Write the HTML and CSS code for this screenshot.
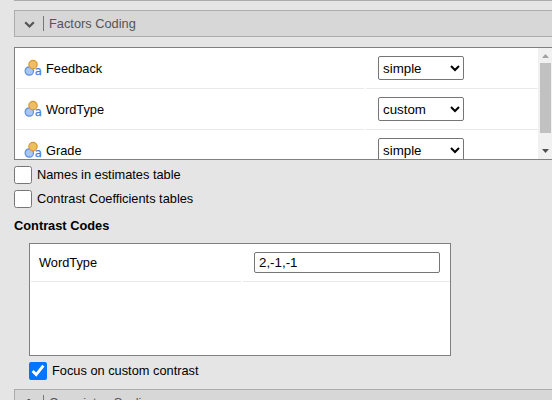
FILE: index.html
```html
<!DOCTYPE html>
<html lang="en">
<head>
<meta charset="utf-8">
<title>Factors Coding</title>
<link rel="stylesheet" href="styles.css">
</head>
<body>
<svg width="0" height="0" class="defs">
  <symbol id="nominal" viewBox="0 0 18 18">
    <circle cx="5.3" cy="12" r="4.2" fill="#a9c5f1" stroke="#5c91e4" stroke-width="1.2"/>
    <circle cx="9" cy="5.6" r="4.2" fill="#f0bd60" stroke="#d69a34" stroke-width="1.2"/>
    <text x="10.8" y="16" class="icon-letter">a</text>
  </symbol>
</svg>
<main class="panel">
  <div class="previous"></div>
  <header class="bar">
    <svg class="chevron" width="12" height="10" viewBox="0 0 12 10"><path d="M1.2 2.2 L5.5 6.5 L9.8 2.2"/></svg>
    <span class="bar-title">Factors Coding</span>
  </header>
  <section class="list">
    <div class="rows">
      <div class="row">
        <div class="name"><svg class="icon"><use href="#nominal"/></svg>Feedback</div>
        <div class="value"><select><option>simple</option></select></div>
      </div>
      <div class="row">
        <div class="name"><svg class="icon"><use href="#nominal"/></svg>WordType</div>
        <div class="value"><select><option>custom</option></select></div>
      </div>
      <div class="row">
        <div class="name"><svg class="icon"><use href="#nominal"/></svg>Grade</div>
        <div class="value"><select><option>simple</option></select></div>
      </div>
    </div>
    <div class="scrollbar">
      <svg class="arrow" width="14" height="15" viewBox="0 0 14 15"><path d="M4 10 L7.5 6 L11 10Z" fill="#a3a3a3"/></svg>
      <div class="thumb"></div>
      <svg class="arrow last" width="14" height="15" viewBox="0 0 14 15"><path d="M4 5 L7.5 9 L11 5Z" fill="#505050"/></svg>
    </div>
  </section>
  <label class="check first"><input type="checkbox">Names in estimates table</label>
  <label class="check second"><input type="checkbox">Contrast Coefficients tables</label>
  <h2>Contrast Codes</h2>
  <div class="codes-group">
    <section class="codes">
      <div class="code-row">
        <div class="code-name">WordType</div>
        <div class="code-value"><input type="text" value="2,-1,-1"></div>
      </div>
    </section>
    <label class="check focus"><input type="checkbox" checked>Focus on custom contrast</label>
  </div>
  <header class="bar next">
    <svg class="chevron" width="12" height="10" viewBox="0 0 12 10"><path d="M4 0 L8 4 L4 8"/></svg>
    <span class="bar-title">Covariates Scaling</span>
  </header>
</main>
</body>
</html>
```
FILE: styles.css
```css
* { box-sizing: border-box; }
html, body { height: 400px; overflow: hidden; }
body {
  margin: 0;
  background: #e5e5e5;
  color: #000;
  font: 12.8px/16px "Liberation Sans", Arial, sans-serif;
}
.defs { display: block; }
.panel { padding-left: 14px; }
.previous { height: 1px; background: #acacac; margin-bottom: 9px; }
.bar {
  display: flex;
  align-items: center;
  height: 27px;
  padding-left: 9px;
  border: 1px solid #acacac;
  border-right: 0;
  background: #d7d7d7;
  color: #555;
}
.chevron { fill: none; stroke: #555; stroke-width: 2.2; margin-top: 3px; }
.bar-title { border-left: 1px solid #777; margin-left: 7px; padding-left: 5px; line-height: 15px; }
.list {
  display: flex;
  height: 113px;
  margin-top: 10px;
  border: 1px solid #808080;
  border-right: 0;
  background: #fff;
  overflow: hidden;
}
.rows { width: 523px; padding-left: 1px; flex: none; }
.row { display: grid; grid-template-columns: 348px 172px; column-gap: 2px; height: 41px; }
.name, .value { display: flex; align-items: center; border-bottom: 1px solid #e9e9e9; }
.name { padding: 1px 0 0 8px; }
.value { padding-left: 12px; }
.icon { width: 18px; height: 18px; margin: -1px 4px 0 0; }
.icon-letter { font: 11.5px "DejaVu Sans", sans-serif; fill: #3f7edf; stroke: #3f7edf; stroke-width: .25; }
select {
  width: 86px;
  height: 24px;
  margin: 0;
  padding: 0;
  border: 1px solid #767676;
  border-radius: 2px;
  background-color: #fff;
  color: #000;
  font: 13.333px "Liberation Sans", Arial, sans-serif;
}
.scrollbar { display: flex; flex-direction: column; width: 14px; flex: none; background: #f1f1f1; }
.arrow { display: block; flex: none; }
.thumb { width: 11px; height: 70px; margin-left: 2px; background: #c1c1c1; }
.last { margin-top: auto; }
.check { display: flex; align-items: center; height: 18px; gap: 5px; }
.check input { width: 18px; height: 18px; margin: 0; }
.first { margin-top: 6px; }
.second { margin-top: 6px; }
h2 { margin: 10px 0 9px; font-size: 12.8px; line-height: 16px; font-weight: bold; }
.codes-group { margin-left: 15px; }
.codes { width: 422px; height: 113px; padding-left: 1px; border: 1px solid #808080; background: #fff; }
.code-row { display: grid; grid-template-columns: 210px 207px; column-gap: 2px; height: 38px; }
.code-name, .code-value { display: flex; align-items: center; border-bottom: 1px solid #e9e9e9; }
.code-name { padding-left: 8px; }
.code-value { padding-left: 11px; }
.code-value input {
  width: 186px;
  height: 21px;
  padding: 0 4px;
  border: 1px solid #767676;
  border-radius: 2px;
  font: 13.333px "Liberation Sans", Arial, sans-serif;
}
.focus { margin-top: 6px; }
.next { margin-top: 9px; }
```
